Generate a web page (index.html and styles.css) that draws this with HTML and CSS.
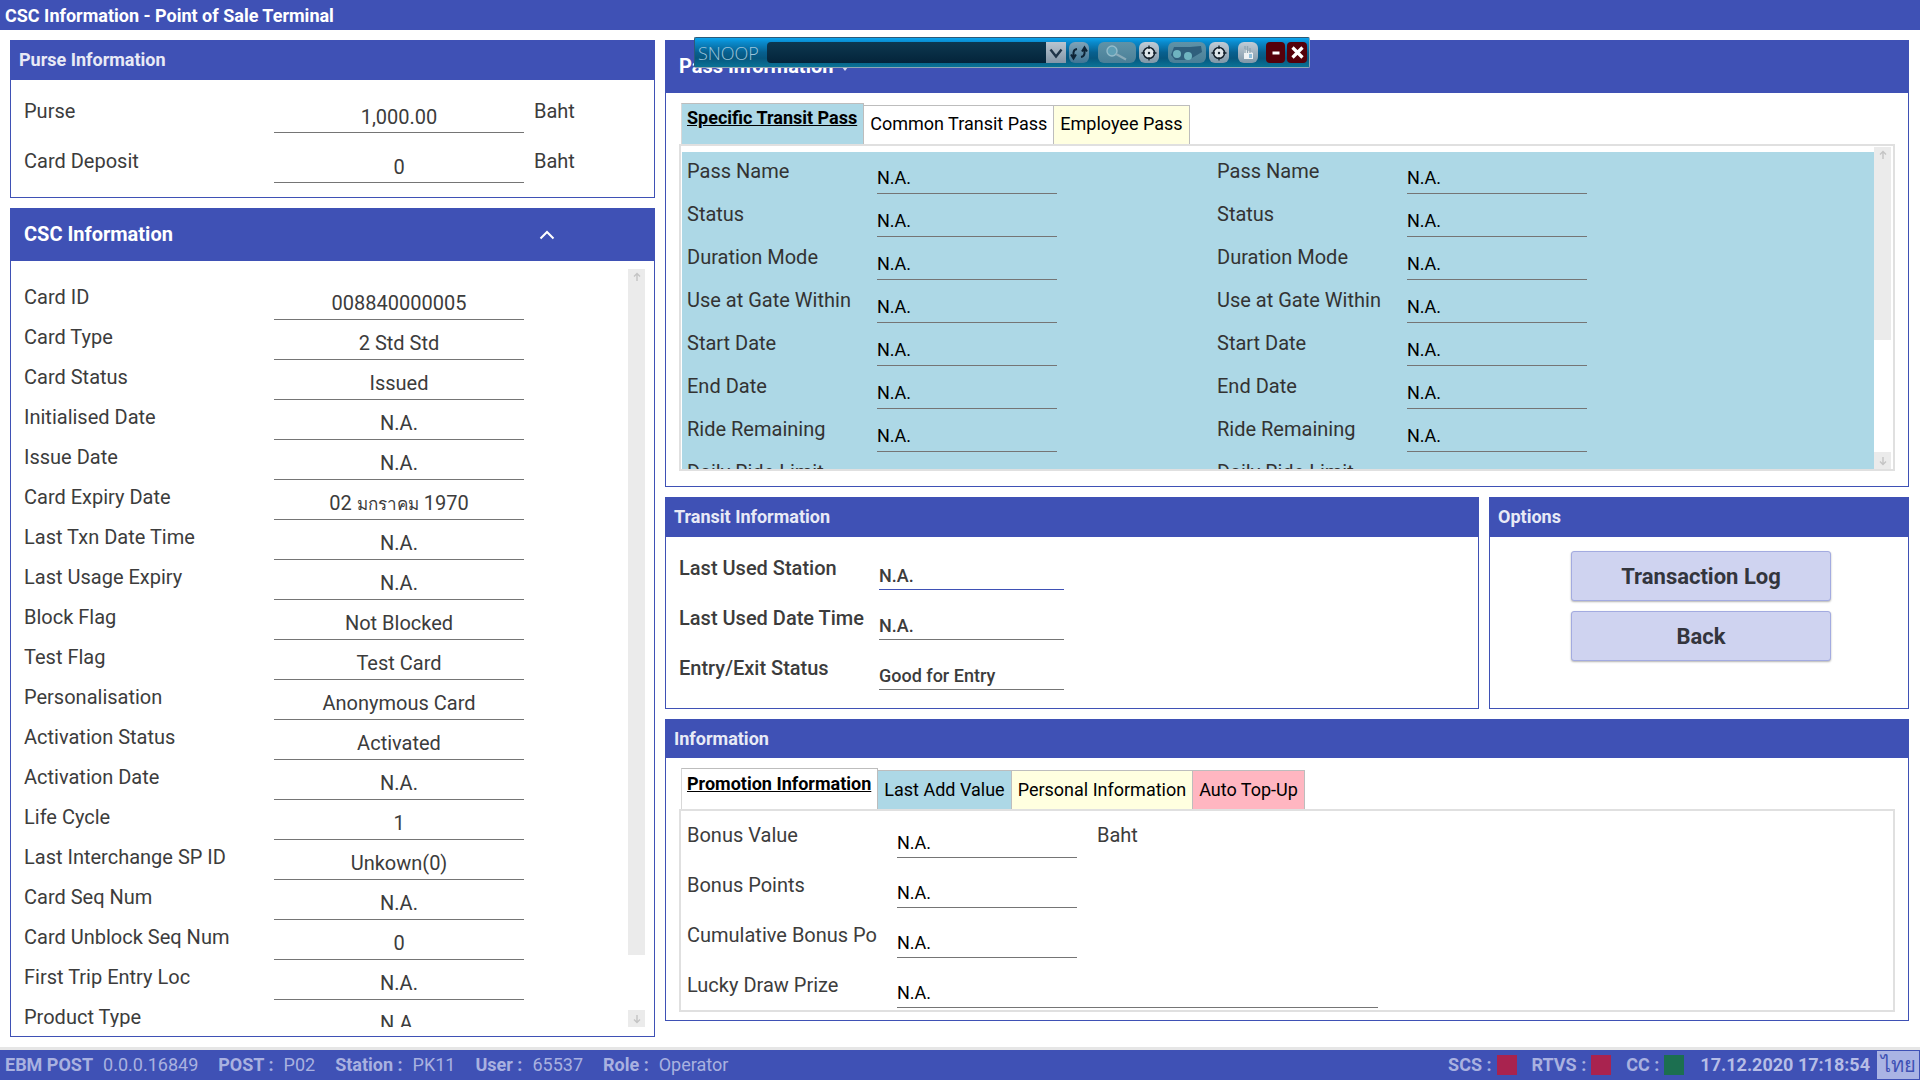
FILE: index.html
```html
<!DOCTYPE html>
<html>

<head>
  <meta charset="utf-8">
  <title>CSC Information - Point of Sale Terminal</title>
  <link rel="stylesheet" href="styles.css">
</head>

<body>
  <div class="titlebar">CSC Information - Point of Sale Terminal</div>

  <div class="main">
    <div class="leftcol">
      <div class="panel purse">
        <div class="head">Purse Information</div>
        <div class="purse-body">
          <div class="row"><span class="lbl">Purse</span><span class="val">1,000.00</span><span class="unit">Baht</span></div>
          <div class="row"><span class="lbl">Card Deposit</span><span class="val">0</span><span class="unit">Baht</span></div>
        </div>
      </div>

      <div class="panel csc">
        <div class="head big">CSC Information
          <svg class="chevron" width="16" height="10" viewBox="0 0 16 10"><path d="M1.5 8.5 L8 2 L14.5 8.5" fill="none" stroke="#fff" stroke-width="2"/></svg>
        </div>
        <div class="csc-body">
          <div class="csc-list">
            <div class="row"><span class="lbl">Card ID</span><span class="val">008840000005</span></div>
            <div class="row"><span class="lbl">Card Type</span><span class="val">2 Std Std</span></div>
            <div class="row"><span class="lbl">Card Status</span><span class="val">Issued</span></div>
            <div class="row"><span class="lbl">Initialised Date</span><span class="val">N.A.</span></div>
            <div class="row"><span class="lbl">Issue Date</span><span class="val">N.A.</span></div>
            <div class="row"><span class="lbl">Card Expiry Date</span><span class="val">02 <span class="thai">มกราคม</span> 1970</span></div>
            <div class="row"><span class="lbl">Last Txn Date Time</span><span class="val">N.A.</span></div>
            <div class="row"><span class="lbl">Last Usage Expiry</span><span class="val">N.A.</span></div>
            <div class="row"><span class="lbl">Block Flag</span><span class="val">Not Blocked</span></div>
            <div class="row"><span class="lbl">Test Flag</span><span class="val">Test Card</span></div>
            <div class="row"><span class="lbl">Personalisation</span><span class="val">Anonymous Card</span></div>
            <div class="row"><span class="lbl">Activation Status</span><span class="val">Activated</span></div>
            <div class="row"><span class="lbl">Activation Date</span><span class="val">N.A.</span></div>
            <div class="row"><span class="lbl">Life Cycle</span><span class="val">1</span></div>
            <div class="row"><span class="lbl">Last Interchange SP ID</span><span class="val">Unkown(0)</span></div>
            <div class="row"><span class="lbl">Card Seq Num</span><span class="val">N.A.</span></div>
            <div class="row"><span class="lbl">Card Unblock Seq Num</span><span class="val">0</span></div>
            <div class="row"><span class="lbl">First Trip Entry Loc</span><span class="val">N.A.</span></div>
            <div class="row"><span class="lbl">Product Type</span><span class="val">N.A.</span></div>
          </div>
          <div class="scrollbar csc-scroll">
            <div class="track"><svg class="arrow" width="10" height="10" viewBox="0 0 10 10"><path d="M5 9V1.5M2 4.5L5 1.5L8 4.5" fill="none" stroke="#c4c4c4" stroke-width="1.4"/></svg></div>
            <div class="btn"><svg class="arrow" width="10" height="10" viewBox="0 0 10 10"><path d="M5 1V8.5M2 5.5L5 8.5L8 5.5" fill="none" stroke="#c4c4c4" stroke-width="1.4"/></svg></div>
          </div>
        </div>
      </div>
    </div>

    <div class="rightcol">
      <div class="panel pass">
        <div class="head big pass-head">Pass Information <span class="caret"></span></div>
        <div class="tabs">
          <div class="tab active blue">Specific Transit Pass</div>
          <div class="tab white">Common Transit Pass</div>
          <div class="tab yellow">Employee Pass</div>
        </div>
        <div class="tabbox pass-box">
          <div class="pass-fill">
            <div class="pass-col">
              <div class="row"><span class="lbl">Pass Name</span><span class="val">N.A.</span></div>
              <div class="row"><span class="lbl">Status</span><span class="val">N.A.</span></div>
              <div class="row"><span class="lbl">Duration Mode</span><span class="val">N.A.</span></div>
              <div class="row"><span class="lbl">Use at Gate Within</span><span class="val">N.A.</span></div>
              <div class="row"><span class="lbl">Start Date</span><span class="val">N.A.</span></div>
              <div class="row"><span class="lbl">End Date</span><span class="val">N.A.</span></div>
              <div class="row"><span class="lbl">Ride Remaining</span><span class="val">N.A.</span></div>
              <div class="row"><span class="lbl">Daily Ride Limit</span><span class="val"></span></div>
            </div>
            <div class="pass-col">
              <div class="row"><span class="lbl">Pass Name</span><span class="val">N.A.</span></div>
              <div class="row"><span class="lbl">Status</span><span class="val">N.A.</span></div>
              <div class="row"><span class="lbl">Duration Mode</span><span class="val">N.A.</span></div>
              <div class="row"><span class="lbl">Use at Gate Within</span><span class="val">N.A.</span></div>
              <div class="row"><span class="lbl">Start Date</span><span class="val">N.A.</span></div>
              <div class="row"><span class="lbl">End Date</span><span class="val">N.A.</span></div>
              <div class="row"><span class="lbl">Ride Remaining</span><span class="val">N.A.</span></div>
              <div class="row"><span class="lbl">Daily Ride Limit</span><span class="val"></span></div>
            </div>
          </div>
          <div class="scrollbar pass-scroll">
            <div class="track"><svg class="arrow" width="10" height="10" viewBox="0 0 10 10"><path d="M5 9V1.5M2 4.5L5 1.5L8 4.5" fill="none" stroke="#c4c4c4" stroke-width="1.4"/></svg></div>
            <div class="btn"><svg class="arrow" width="10" height="10" viewBox="0 0 10 10"><path d="M5 1V8.5M2 5.5L5 8.5L8 5.5" fill="none" stroke="#c4c4c4" stroke-width="1.4"/></svg></div>
          </div>
        </div>
      </div>

      <div class="midrow">
        <div class="panel transit">
          <div class="head">Transit Information</div>
          <div class="transit-body">
            <div class="row"><span class="lbl">Last Used Station</span><span class="val focus">N.A.</span></div>
            <div class="row"><span class="lbl">Last Used Date Time</span><span class="val">N.A.</span></div>
            <div class="row"><span class="lbl">Entry/Exit Status</span><span class="val">Good for Entry</span></div>
          </div>
        </div>
        <div class="panel options">
          <div class="head">Options</div>
          <div class="options-body">
            <button class="btn-raised">Transaction Log</button>
            <button class="btn-raised">Back</button>
          </div>
        </div>
      </div>

      <div class="panel info">
        <div class="head">Information</div>
        <div class="tabs">
          <div class="tab active white">Promotion Information</div>
          <div class="tab blue">Last Add Value</div>
          <div class="tab yellow">Personal Information</div>
          <div class="tab pink">Auto Top-Up</div>
        </div>
        <div class="tabbox info-box">
          <div class="row"><span class="lbl">Bonus Value</span><span class="val">N.A.</span><span class="unit">Baht</span></div>
          <div class="row"><span class="lbl">Bonus Points</span><span class="val">N.A.</span></div>
          <div class="row"><span class="lbl">Cumulative Bonus Po</span><span class="val">N.A.</span></div>
          <div class="row"><span class="lbl">Lucky Draw Prize</span><span class="val wide">N.A.</span></div>
        </div>
      </div>
    </div>
  </div>

  <div class="statusbar">
    <div class="status-left">
      <b>EBM POST</b><span class="s1">0.0.0.16849</span>
      <b class="s2">POST :</b><span class="s1">P02</span>
      <b class="s2">Station :</b><span class="s1">PK11</span>
      <b class="s2">User :</b><span class="s1">65537</span>
      <b class="s2">Role :</b><span class="s1">Operator</span>
    </div>
    <div class="status-right">
      <b>SCS :</b><i class="light red"></i>
      <b class="s3">RTVS :</b><i class="light red"></i>
      <b class="s3">CC :</b><i class="light green"></i>
      <b class="clock">17.12.2020 17:18:54</b>
      <span class="lang">ไทย</span>
    </div>
  </div>

  <!-- floating inspector toolbar -->
  <div class="snoop">
    <span class="snoop-name">SNOOP</span>
    <div class="snoop-field">
      <span class="snoop-drop"><svg width="16" height="12" viewBox="0 0 16 12"><path d="M2.5 2.5L8 9.5L13.5 2.5" fill="none" stroke="#1f3448" stroke-width="2.4"/></svg></span>
    </div>
    <span class="snoop-btn refresh"><svg width="18" height="18" viewBox="0 0 18 18"><path d="M3.5 14V8.5A4 4 0 0 1 7 5M1 10.5L3.5 14.5L6 10.5" fill="none" stroke="#0e2436" stroke-width="2"/><path d="M14.5 4V9.5A4 4 0 0 1 11 13M12 7.5L14.5 3.5L17 7.5" fill="none" stroke="#0e2436" stroke-width="2"/></svg></span>
    <span class="snoop-btn wide first"><svg width="30" height="18" viewBox="0 0 30 18"><circle cx="10" cy="7" r="5" fill="#5f9fb5" stroke="#94bccb" stroke-width="1.4"/><path d="M14 10L24 15.5" stroke="#8aabb9" stroke-width="2.2"/></svg></span>
    <span class="snoop-btn square"><svg width="16" height="16" viewBox="0 0 16 16"><circle cx="8" cy="8" r="5.5" fill="#dfe6ea" stroke="#14202c" stroke-width="1.5"/><circle cx="8" cy="8" r="1.2" fill="#14202c"/><path d="M8 0.5V4M8 12V15.5M0.5 8H4M12 8H15.5" stroke="#14202c" stroke-width="1.3"/></svg></span>
    <span class="snoop-btn wide second"><svg width="34" height="18" viewBox="0 0 34 18"><path d="M4 3H20L31 2L32 8L22 14L14 16H5L1 11Z" fill="#2f5f7c"/><circle cx="7" cy="10" r="4" fill="#6fb4c0"/><circle cx="18" cy="12" r="4" fill="#6fb4c0"/></svg></span>
    <span class="snoop-btn square"><svg width="16" height="16" viewBox="0 0 16 16"><circle cx="8" cy="8" r="5.5" fill="#dfe6ea" stroke="#14202c" stroke-width="1.5"/><circle cx="8" cy="8" r="1.2" fill="#14202c"/><path d="M8 0.5V4M8 12V15.5M0.5 8H4M12 8H15.5" stroke="#14202c" stroke-width="1.3"/></svg></span>
    <span class="snoop-btn square third"><svg width="14" height="16" viewBox="0 0 14 16"><path d="M3 4V14H12V8Z" fill="#eef2f4"/><path d="M4 1V8M6.5 1V8M9 3V8" stroke="#8ea4b0" stroke-width="1.3"/><rect x="8" y="9" width="3" height="4" fill="#8fbfdc"/></svg></span>
    <span class="snoop-win min"><svg width="12" height="12" viewBox="0 0 12 12"><path d="M2.5 6H9.5" stroke="#fff" stroke-width="3"/></svg></span>
    <span class="snoop-win close"><svg width="13" height="13" viewBox="0 0 13 13"><path d="M1.5 1.5L11.5 11.5M11.5 1.5L1.5 11.5" stroke="#fff" stroke-width="3.2"/></svg></span>
  </div>
</body>

</html>
```

FILE: styles.css
```css
* {
  box-sizing: border-box;
}

html,
body {
  margin: 0;
  height: 100%;
  overflow: hidden;
}

body {
  width: 1920px;
  height: 1080px;
  display: flex;
  flex-direction: column;
  background-color: white;
  color: #3c3c3c;
  font-family: Roboto, "Noto Sans CJK SC", sans-serif;
  font-size: 20px;
  position: relative;
}

.titlebar {
  height: 30px;
  line-height: 31px;
  padding-left: 5px;
  background-color: #3f51b5;
  color: white;
  font-weight: 700;
  font-size: 18px;
}

.main {
  flex: 1;
  display: flex;
  gap: 10px;
  padding: 10px 11px 0 10px;
  min-height: 0;
}

.leftcol {
  width: 645px;
  flex-shrink: 0;
  display: flex;
  flex-direction: column;
  gap: 10px;
}

.rightcol {
  flex: 1;
  min-width: 0;
  display: flex;
  flex-direction: column;
  gap: 10px;
}

.panel {
  border: 1px solid #3f51b5;
  border-top: none;
  background-color: white;
}

.head {
  margin: 0 -1px;
  height: 40px;
  line-height: 39px;
  padding-left: 9px;
  background-color: #3f51b5;
  color: #e8eaf6;
  font-weight: 700;
  font-size: 18px;
}

.head.big {
  height: 53px;
  line-height: 52px;
  padding-left: 14px;
  font-size: 20px;
  color: white;
  position: relative;
}

.row {
  display: flex;
  position: relative;
}

.lbl {
  display: block;
  white-space: nowrap;
  overflow: hidden;
}

.val {
  display: block;
  border-bottom: 1px solid #757575;
}

/* purse panel */
.purse {
  height: 158px;
}

.purse-body {
  padding: 3px 0 0 13px;
}

.purse-body .row {
  height: 50px;
}

.purse-body .lbl {
  width: 250px;
  padding-top: 15px;
  line-height: 26px;
}

.purse-body .val,
.csc-list .val {
  width: 250px;
  text-align: center;
}

.purse-body .val {
  height: 50px;
  padding-top: 21px;
  line-height: 26px;
}

.purse-body .unit {
  padding: 15px 0 0 10px;
  line-height: 26px;
}

/* csc panel */
.csc {
  height: 829px;
}

.chevron {
  position: absolute;
  left: 529px;
  top: 22px;
}

.csc-body {
  height: 775px;
  display: flex;
  overflow: hidden;
}

.csc-list {
  padding: 19px 0 0 13px;
  width: 617px;
  height: 766px;
  overflow: hidden;
}

.csc-list .row {
  height: 40px;
}

.csc-list .lbl {
  width: 250px;
  padding-top: 4px;
  line-height: 26px;
}

.csc-list .val {
  height: 40px;
  padding-top: 10px;
  line-height: 26px;
}

.thai {
  font-family: "Noto Sans", "DejaVu Sans", sans-serif;
  font-size: 17px;
}

.scrollbar {
  display: flex;
  flex-direction: column;
  justify-content: space-between;
}

.scrollbar .track {
  background-color: #ebebeb;
  display: flex;
  justify-content: center;
  padding-top: 3px;
}

.scrollbar .btn {
  background-color: #ebebeb;
  display: flex;
  justify-content: center;
  align-items: center;
}

.csc-scroll {
  width: 17px;
  margin-top: 8px;
  margin-bottom: 9px;
}

.csc-scroll .track {
  height: 686px;
}

.csc-scroll .btn {
  height: 17px;
}

/* tabs */
.tabs {
  display: flex;
  align-items: flex-end;
  padding-left: 15px;
  margin-top: 10px;
}

.tab {
  height: 39px;
  padding: 0 6px;
  font-size: 18px;
  line-height: 38px;
  border: 1px solid #bdbdbd;
  border-bottom: none;
  border-left: none;
  color: black;
  white-space: nowrap;
}

.tab.active {
  height: 41px;
  padding-left: 5px;
  border-left: 1px solid #d8d8d8;
  font-weight: 700;
  line-height: 28px;
  text-decoration: underline;
}

.tab.blue {
  background-color: lightblue;
}

.tab.white {
  background-color: white;
}

.tab.yellow {
  background-color: lightyellow;
}

.tab.pink {
  background-color: lightpink;
}

.tabbox {
  margin: 0 13px;
  border: 2px solid #e0e0e0;
}

/* pass panel */
.pass {
  height: 447px;
}

.pass-head {
  color: white;
  line-height: 54px;
}

.caret {
  display: inline-block;
  border: 3px solid transparent;
  border-top: 4px solid #d5d9ef;
  margin-left: 4px;
  vertical-align: -1px;
}

.pass .tabs {
  height: 51px;
  margin-top: 0;
}

.pass .tab {
  line-height: 36px;
}

.pass .tab.active {
  line-height: 28px;
}

.pass-box {
  height: 327px;
  display: flex;
  padding: 6px 2px 0 1px;
  overflow: hidden;
}

.pass-fill {
  width: 1194px;
  height: 317px;
  background-color: lightblue;
  display: flex;
  overflow: hidden;
  color: #333;
}

.pass-col {
  width: 530px;
  padding-left: 5px;
  flex-shrink: 0;
}

.pass-col .row {
  height: 43px;
}

.pass-col .lbl {
  width: 190px;
  padding-top: 6px;
  line-height: 26px;
}

.pass-col .val {
  width: 180px;
  height: 42px;
  padding-top: 12px;
  line-height: 27px;
  color: black;
  font-size: 18px;
}

.pass-scroll {
  width: 17px;
  height: 322px;
  margin-top: -5px;
}

.pass-scroll .track {
  height: 193px;
}

.pass-scroll .btn {
  height: 17px;
}

/* middle row */
.midrow {
  display: flex;
  gap: 10px;
}

.transit {
  width: 814px;
  height: 212px;
}

.transit-body {
  padding: 3px 0 0 13px;
}

.transit-body .row {
  height: 50px;
}

.transit-body .lbl {
  width: 200px;
  padding-top: 15px;
  line-height: 26px;
  font-weight: 500;
}

.transit-body .val {
  width: 185px;
  height: 50px;
  padding-top: 22px;
  line-height: 27px;
  font-weight: 500;
  font-size: 18px;
}

.transit-body .val.focus {
  border-bottom-color: #3f51b5;
}

.options {
  flex: 1;
  height: 212px;
}

.options-body {
  display: flex;
  flex-direction: column;
  align-items: center;
  gap: 10px;
  padding-top: 14px;
  padding-left: 4px;
}

.btn-raised {
  width: 260px;
  height: 50px;
  border: 1px solid #a3abe0;
  border-radius: 3px;
  background-color: #cfd3f0;
  color: #33353d;
  font-family: inherit;
  font-size: 22px;
  font-weight: 700;
  box-shadow: 0 1px 2px rgba(0, 0, 0, 0.3);
}

/* information panel */
.info {
  height: 302px;
}

.info .head {
  height: 39px;
}

.info .tabs {
  height: 51px;
  margin-top: 0;
}

.info .tab.active {
  line-height: 30px;
}

.info-box {
  height: 203px;
  padding: 0 0 0 6px;
}

.info-box .row {
  height: 50px;
}

.info-box .lbl {
  width: 210px;
  padding-top: 11px;
  line-height: 26px;
}

.info-box .val {
  width: 180px;
  height: 47px;
  margin-bottom: 3px;
  padding-top: 18px;
  line-height: 27px;
  color: black;
  font-size: 18px;
}

.info-box .val.wide {
  width: 481px;
}

.info-box .unit {
  padding: 11px 0 0 20px;
  line-height: 26px;
}

/* status bar */
.statusbar {
  height: 33px;
  border-top: 3px solid #e6e6e6;
  background-color: #3f51b5;
  color: #a9b1e0;
  display: flex;
  justify-content: space-between;
  align-items: center;
  font-size: 18px;
  line-height: 30px;
}

.statusbar b {
  font-weight: 700;
}

.status-left {
  padding-left: 5px;
}

.s1 {
  margin-left: 10px;
}

.status-left .s2 {
  margin-left: 15.5px;
}

.status-right {
  display: flex;
  align-items: center;
  height: 30px;
}

.status-right .s3 {
  margin-left: 15px;
}

.light {
  width: 20px;
  height: 20px;
  margin-left: 5px;
}

.light.red {
  background-color: #a9234f;
}

.light.green {
  background-color: #1c6f50;
}

.status-right .clock {
  margin-left: 16px;
  color: #b6bde6;
}

.lang {
  width: 44px;
  height: 30px;
  margin-left: 6px;
  border: 1px solid #3f51b5;
  background-color: #aab4e4;
  color: #3f51b5;
  font-family: "Noto Sans", "DejaVu Sans", sans-serif;
  font-size: 20px;
  font-weight: 500;
  line-height: 28px;
  text-align: center;
}

/* snoop toolbar */
.snoop {
  position: absolute;
  left: 694px;
  top: 37px;
  width: 616px;
  height: 31px;
  display: flex;
  align-items: center;
  border: 1px solid #2c5a78;
  border-bottom-color: #8fa6b4;
  border-right-color: #8fa6b4;
  border-radius: 2px;
  background: linear-gradient(#0aa4ee 0, #0a8acc 15%, #07608f 50%, #06577f 70%, #0a7396 100%);
}

.snoop-name {
  width: 72px;
  padding-left: 3px;
  color: #9cc4da;
  font-family: "Open Sans", sans-serif;
  font-weight: 300;
  font-size: 18px;
}

.snoop-field {
  width: 299px;
  height: 21px;
  display: flex;
  justify-content: flex-end;
  border-radius: 4px;
  background: linear-gradient(#0d3850, #04243a);
}

.snoop-drop {
  width: 20px;
  display: flex;
  align-items: center;
  justify-content: center;
  background: linear-gradient(#b9c5d0, #8396a8);
}

.snoop-btn {
  height: 21px;
  margin-left: 3px;
  display: flex;
  align-items: center;
  justify-content: center;
  border-radius: 6px;
  background: linear-gradient(#5f93a8, #4a7f97);
}

.snoop-btn.square {
  width: 20px;
  background: linear-gradient(#c0ccd6, #7f97a8);
}

.snoop-btn.refresh {
  width: 20px;
  background: linear-gradient(#7fa3b8, #3f7595);
}

.snoop-btn.wide {
  width: 38px;
}

.snoop-btn.first,
.snoop-btn.second,
.snoop-btn.third {
  margin-left: 9px;
}

.snoop-win {
  width: 19px;
  height: 21px;
  display: flex;
  align-items: center;
  justify-content: center;
  border-radius: 4px;
  background-color: #55000a;
}

.snoop-win.min {
  margin-left: 8px;
}

.snoop-win.close {
  width: 20px;
  margin-left: 2px;
}
```
